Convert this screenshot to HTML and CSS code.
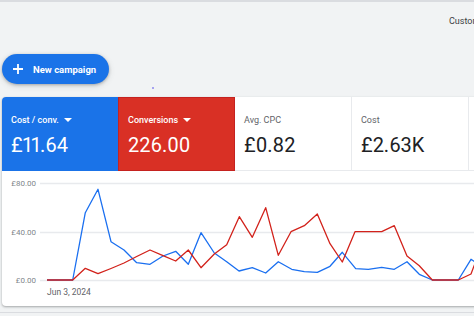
FILE: index.html
```html
<!DOCTYPE html>
<html lang="en">
<head>
  <meta charset="UTF-8">
  <meta name="viewport" content="width=device-width, initial-scale=1.0">
  <title>Overview</title>
  <link rel="stylesheet" href="styles.css">
</head>
<body>
  <div class="topbar">Customers</div>

  <div class="actions">
    <button class="new-campaign">
      <svg class="plus" viewBox="0 0 12 12" width="12" height="12"><path d="M6 1v10M1 6h10" stroke="#fff" stroke-width="1.8"/></svg>
      New campaign
    </button>
    <span class="dot"></span>
  </div>

  <div class="card">
    <div class="tiles">
      <div class="tile tile-blue">
        <div class="tile-label">Cost / conv. <span class="caret"></span></div>
        <div class="tile-value">£11.64</div>
      </div>
      <div class="tile tile-red">
        <div class="tile-label">Conversions <span class="caret"></span></div>
        <div class="tile-value">226.00</div>
      </div>
      <div class="tile">
        <div class="tile-label">Avg. CPC</div>
        <div class="tile-value">£0.82</div>
      </div>
      <div class="tile">
        <div class="tile-label">Cost</div>
        <div class="tile-value">£2.63K</div>
      </div>
      <div class="tile"></div>
    </div>

    <svg class="chart" viewBox="2 171 472 135" width="472" height="135">
      <g class="grid">
        <line x1="40" y1="183.5" x2="474" y2="183.5"/>
        <line x1="40" y1="232.5" x2="474" y2="232.5"/>
        <line x1="40" y1="280.5" x2="474" y2="280.5"/>
      </g>
      <g class="axis">
        <text x="36" y="186" text-anchor="end">£80.00</text>
        <text x="36" y="235" text-anchor="end">£40.00</text>
        <text x="36" y="283" text-anchor="end">£0.00</text>
        <text class="date" x="47" y="295">Jun 3, 2024</text>
      </g>
      <polyline class="line-blue" points="47,280 60,280 72.7,280 85.3,212.7 98,189.3 111,241.7 124,250 136.7,262.7 150,264.3 163,256 175.7,251.3 188.3,264.3 201,232.7 214.3,253 226.7,261.7 239,271 252.3,267.7 265.7,273 278.3,261.7 291.7,269.3 304.3,271.7 317.3,272.3 330,266.3 342.3,252.3 355.7,268.7 368.3,269.3 381.7,267.3 394.3,269.3 407,261.7 419.3,274.3 432.3,280 445,280 458.3,280 471,259.3 484,268"/>
      <polyline class="line-red" points="47,280 60,280 72.7,280 85.3,268.3 98,273.7 111,268.5 124,263 136.7,256.5 150,250 163,255.7 175.7,261 188.3,250 201,267.7 214.3,254 226.7,244.7 239.3,216.7 252.3,237.3 265.7,207.7 278.3,255.3 291,231.7 304.3,225.7 317.3,214 330,243.7 342.3,262 355,231.7 368.3,231.7 381.7,231.7 394.3,225.7 407,256 419.3,265.7 432.3,280 445,280 458.3,280 471,274 480,250"/>
    </svg>
  </div>

  <div class="next-card"></div>
</body>
</html>
```

FILE: styles.css
```css
body {
  margin: 0;
  font-family: Roboto, "Liberation Sans", Arial, sans-serif;
  background-color: #f1f3f4;
  overflow: hidden;
  width: 474px;
  height: 316px;
}

.topbar {
  border-top: 2px solid #dadce0;
  padding: 14px 0 0 449px;
  height: 24px;
  font-size: 9px;
  color: #3c4043;
  white-space: nowrap;
  overflow: hidden;
}

.actions {
  display: flex;
  align-items: flex-start;
  padding: 14px 0 0 2px;
  height: 57px;
  box-sizing: border-box;
}

.new-campaign {
  display: flex;
  align-items: center;
  gap: 9px;
  height: 30px;
  width: 107px;
  padding: 0 0 0 10px;
  border: none;
  border-radius: 15px;
  background-color: #1a73e8;
  color: #fff;
  font-family: Roboto, "Liberation Sans", Arial, sans-serif;
  font-weight: 700;
  font-size: 9.5px;
  box-shadow: 0 1px 3px rgba(60, 64, 67, 0.35), 0 2px 6px rgba(60, 64, 67, 0.15);
  cursor: pointer;
}

.plus {
  flex: none;
}

.dot {
  width: 2px;
  height: 2px;
  margin: 33px 0 0 43px;
  background-color: #a7a3f0;
}

.card {
  margin-left: 2px;
  width: 490px;
  height: 209px;
  background-color: #fff;
  border-radius: 4px;
  box-shadow: 0 1px 2px rgba(60, 64, 67, 0.3), 0 1px 3px rgba(60, 64, 67, 0.15);
  overflow: hidden;
}

.tiles {
  display: flex;
  height: 74px;
}

.tile {
  flex: none;
  width: 117px;
  box-sizing: border-box;
  padding: 17px 0 0 9px;
  border-right: 1px solid #e8eaed;
  border-bottom: 1px solid #e8eaed;
}

.tile:first-child {
  width: 116px;
}

.tile-label {
  display: flex;
  align-items: center;
  gap: 5px;
  height: 12px;
  font-size: 9px;
  color: #5f6368;
}

.tile-value {
  margin-top: 7px;
  font-size: 20px;
  line-height: 24px;
  color: #202124;
  font-variant-numeric: proportional-nums;
}

.tile-blue {
  background-color: #1a73e8;
  border-color: #1a73e8;
}

.tile-red {
  background-color: #d93025;
  border: 1px solid #c5221f;
  padding: 16px 0 0 9px;
}

.tile-blue .tile-label,
.tile-red .tile-label {
  color: #fff;
  font-weight: 500;
}

.tile-blue .tile-value,
.tile-red .tile-value {
  color: #fff;
}

.caret {
  width: 0;
  height: 0;
  border-left: 4px solid transparent;
  border-right: 4px solid transparent;
  border-top: 4px solid #fff;
}

.chart {
  display: block;
}

.grid line {
  stroke: #e8eaed;
  stroke-width: 1.5;
}

.axis text {
  font-family: Roboto, "Liberation Sans", Arial, sans-serif;
  font-size: 8px;
  fill: #80868b;
}

.axis .date {
  font-size: 8.5px;
  fill: #5f6368;
}

.line-blue,
.line-red {
  fill: none;
  stroke-width: 1.3;
  stroke-linejoin: round;
}

.line-blue {
  stroke: #1a6ff0;
}

.line-red {
  stroke: #d2221b;
}

.next-card {
  margin-top: 6px;
  height: 10px;
  border-top: 1px solid #dadce0;
}
```
